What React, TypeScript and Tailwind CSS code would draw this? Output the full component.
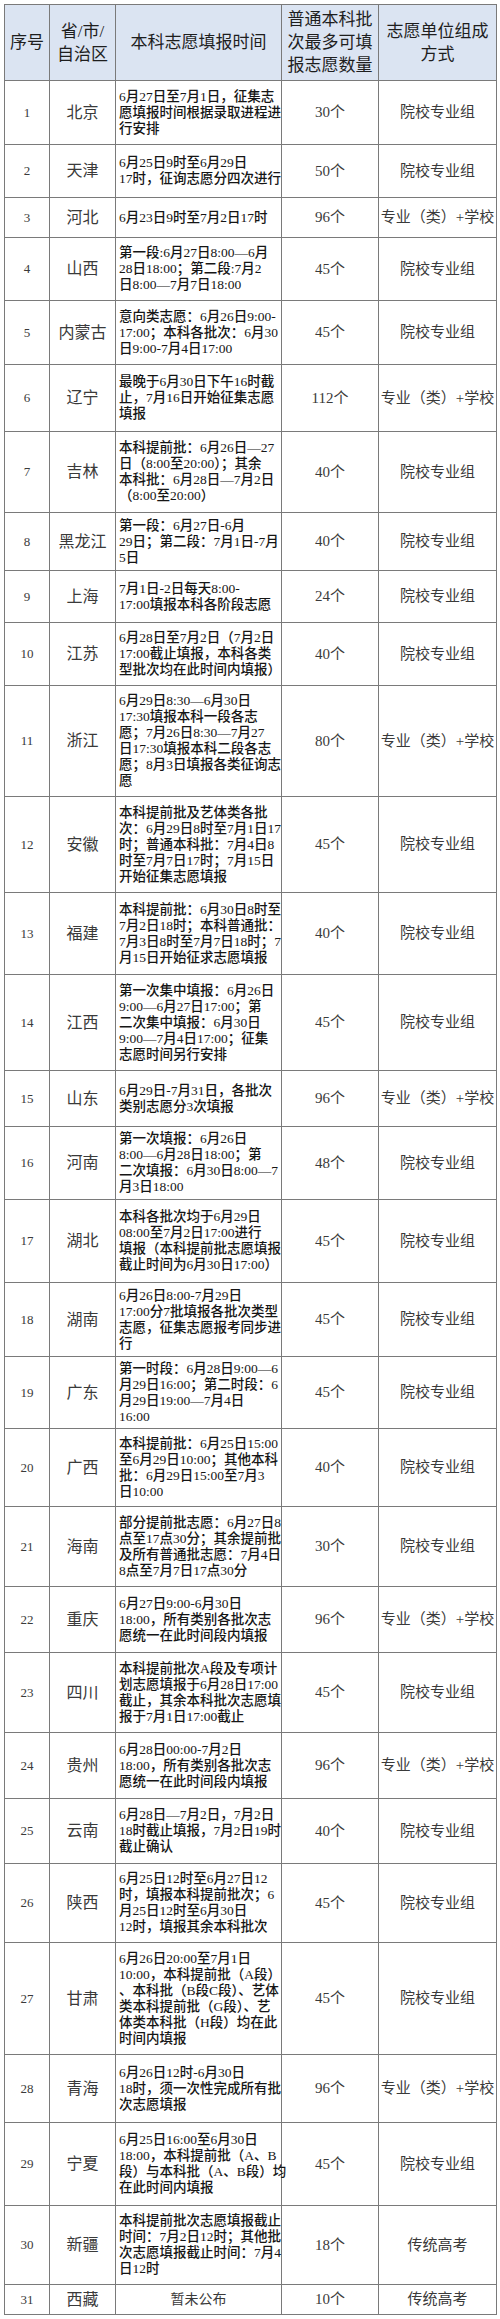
const FONT = 'font-["Liberation_Serif","Noto_Sans_CJK_SC",serif]'

type Row = {
  no: number
  name: string
  lines: string[]
  count: string
  mode: string
  h: string
}

const SCHOOL = '院校专业组'
const MAJOR = '专业（类）+学校'

const rows: Row[] = [
  { no: 1, name: '北京', lines: ['6月27日至7月1日，征集志', '愿填报时间根据录取进程进', '行安排'], count: '30个', mode: SCHOOL, h: 'h-[64px]' },
  { no: 2, name: '天津', lines: ['6月25日9时至6月29日', '17时，征询志愿分四次进行'], count: '50个', mode: SCHOOL, h: 'h-[53px]' },
  { no: 3, name: '河北', lines: ['6月23日9时至7月2日17时'], count: '96个', mode: MAJOR, h: 'h-[40px]' },
  { no: 4, name: '山西', lines: ['第一段:6月27日8:00—6月', '28日18:00；第二段:7月2', '日8:00—7月7日18:00'], count: '45个', mode: SCHOOL, h: 'h-[63px]' },
  { no: 5, name: '内蒙古', lines: ['意向类志愿：6月26日9:00-', '17:00；本科各批次：6月30', '日9:00-7月4日17:00'], count: '45个', mode: SCHOOL, h: 'h-[64px]' },
  { no: 6, name: '辽宁', lines: ['最晚于6月30日下午16时截', '止，7月16日开始征集志愿', '填报'], count: '112个', mode: MAJOR, h: 'h-[67px]' },
  { no: 7, name: '吉林', lines: ['本科提前批：6月26日—27', '日（8:00至20:00）；其余', '本科批：6月28日—7月2日', '（8:00至20:00）'], count: '40个', mode: SCHOOL, h: 'h-[81px]' },
  { no: 8, name: '黑龙江', lines: ['第一段：6月27日-6月', '29日；第二段：7月1日-7月', '5日'], count: '40个', mode: SCHOOL, h: 'h-[58px]' },
  { no: 9, name: '上海', lines: ['7月1日-2日每天8:00-', '17:00填报本科各阶段志愿'], count: '24个', mode: SCHOOL, h: 'h-[52px]' },
  { no: 10, name: '江苏', lines: ['6月28日至7月2日（7月2日', '17:00截止填报，本科各类', '型批次均在此时间内填报）'], count: '40个', mode: SCHOOL, h: 'h-[63px]' },
  { no: 11, name: '浙江', lines: ['6月29日8:30—6月30日', '17:30填报本科一段各志', '愿；7月26日8:30—7月27', '日17:30填报本科二段各志', '愿；8月3日填报各类征询志', '愿'], count: '80个', mode: MAJOR, h: 'h-[111px]' },
  { no: 12, name: '安徽', lines: ['本科提前批及艺体类各批', '次：6月29日8时至7月1日17', '时；普通本科批：7月4日8', '时至7月7日17时；7月15日', '开始征集志愿填报'], count: '45个', mode: SCHOOL, h: 'h-[96px]' },
  { no: 13, name: '福建', lines: ['本科提前批：6月30日8时至', '7月2日18时；本科普通批：', '7月3日8时至7月7日18时；7', '月15日开始征求志愿填报'], count: '40个', mode: SCHOOL, h: 'h-[82px]' },
  { no: 14, name: '江西', lines: ['第一次集中填报：6月26日', '9:00—6月27日17:00；第', '二次集中填报：6月30日', '9:00—7月4日17:00；征集', '志愿时间另行安排'], count: '45个', mode: SCHOOL, h: 'h-[96px]' },
  { no: 15, name: '山东', lines: ['6月29日-7月31日，各批次', '类别志愿分3次填报'], count: '96个', mode: MAJOR, h: 'h-[56px]' },
  { no: 16, name: '河南', lines: ['第一次填报：6月26日', '8:00—6月28日18:00；第', '二次填报：6月30日8:00—7', '月3日18:00'], count: '48个', mode: SCHOOL, h: 'h-[73px]' },
  { no: 17, name: '湖北', lines: ['本科各批次均于6月29日', '08:00至7月2日17:00进行', '填报（本科提前批志愿填报', '截止时间为6月30日17:00）'], count: '45个', mode: SCHOOL, h: 'h-[83px]' },
  { no: 18, name: '湖南', lines: ['6月26日8:00-7月29日', '17:00分7批填报各批次类型', '志愿，征集志愿报考同步进', '行'], count: '45个', mode: SCHOOL, h: 'h-[74px]' },
  { no: 19, name: '广东', lines: ['第一时段：6月28日9:00—6', '月29日16:00；第二时段：6', '月29日19:00—7月4日', '16:00'], count: '45个', mode: SCHOOL, h: 'h-[72px]' },
  { no: 20, name: '广西', lines: ['本科提前批：6月25日15:00', '至6月29日10:00；其他本科', '批：6月29日15:00至7月3', '日10:00'], count: '40个', mode: SCHOOL, h: 'h-[78px]' },
  { no: 21, name: '海南', lines: ['部分提前批志愿：6月27日8', '点至17点30分；其余提前批', '及所有普通批志愿：7月4日', '8点至7月7日17点30分'], count: '30个', mode: SCHOOL, h: 'h-[80px]' },
  { no: 22, name: '重庆', lines: ['6月27日9:00-6月30日', '18:00，所有类别各批次志', '愿统一在此时间段内填报'], count: '96个', mode: MAJOR, h: 'h-[66px]' },
  { no: 23, name: '四川', lines: ['本科提前批次A段及专项计', '划志愿填报于6月28日17:00', '截止，其余本科批次志愿填', '报于7月1日17:00截止'], count: '45个', mode: SCHOOL, h: 'h-[80px]' },
  { no: 24, name: '贵州', lines: ['6月28日00:00-7月2日', '18:00，所有类别各批次志', '愿统一在此时间段内填报'], count: '96个', mode: MAJOR, h: 'h-[66px]' },
  { no: 25, name: '云南', lines: ['6月28日—7月2日，7月2日', '18时截止填报，7月2日19时', '截止确认'], count: '40个', mode: SCHOOL, h: 'h-[65px]' },
  { no: 26, name: '陕西', lines: ['6月25日12时至6月27日12', '时，填报本科提前批次；6', '月25日12时至6月30日', '12时，填报其余本科批次'], count: '45个', mode: SCHOOL, h: 'h-[79px]' },
  { no: 27, name: '甘肃', lines: ['6月26日20:00至7月1日', '10:00，本科提前批（A段）', '、本科批（B段C段）、艺体', '类本科提前批（G段）、艺', '体类本科批（H段）均在此', '时间内填报'], count: '45个', mode: SCHOOL, h: 'h-[112px]' },
  { no: 28, name: '青海', lines: ['6月26日12时-6月30日', '18时，须一次性完成所有批', '次志愿填报'], count: '96个', mode: MAJOR, h: 'h-[68px]' },
  { no: 29, name: '宁夏', lines: ['6月25日16:00至6月30日', '18:00，本科提前批（A、B', '段）与本科批（A、B段）均', '在此时间内填报'], count: '45个', mode: SCHOOL, h: 'h-[83px]' },
  { no: 30, name: '新疆', lines: ['本科提前批次志愿填报截止', '时间：7月2日12时；其他批', '次志愿填报截止时间：7月4', '日12时'], count: '18个', mode: '传统高考', h: 'h-[79px]' },
]

function Cell({ w, children, className = '' }: { w: string; children: React.ReactNode; className?: string }) {
  return (
    <div className={`${w} shrink-0 h-full border-r border-b border-[#7a7a7a] flex items-center justify-center ${className}`}>
      {children}
    </div>
  )
}

export default function App() {
  return (
    <div className={`w-[500px] h-[2319px] bg-white pt-[4px] pl-[4px] ${FONT}`}>
      <div className="w-[493px] border-l border-t border-[#7a7a7a]">
        {/* 表头 */}
        <div className="flex h-[76px] bg-[#dbe4f2] text-[17px] leading-[23px] text-[#1e1e1e] text-center">
          <Cell w="w-[45px]">序号</Cell>
          <Cell w="w-[66px]">
            <span>省/市/<br />自治区</span>
          </Cell>
          <Cell w="w-[166px]">本科志愿填报时间</Cell>
          <Cell w="w-[97px]">
            <span>普通本科批<br />次最多可填<br />报志愿数量</span>
          </Cell>
          <Cell w="w-[118px]">
            <span>志愿单位组成<br />方式</span>
          </Cell>
        </div>

        {rows.map((r) => (
          <div key={r.no} className={`flex ${r.h} text-[#3a3a3a]`}>
            <Cell w="w-[45px]" className="text-[13px]">{r.no}</Cell>
            <Cell w="w-[66px]" className="text-[16px]">{r.name}</Cell>
            <Cell w="w-[166px]" className="justify-start pl-[3px]">
              <div className="text-[13.5px] leading-[16px] font-medium text-[#151515] whitespace-nowrap">
                {r.lines.map((l, i) => (
                  <div key={i}>{l}</div>
                ))}
              </div>
            </Cell>
            <Cell w="w-[97px]" className="text-[15px]">{r.count}</Cell>
            <Cell w="w-[118px]" className="text-[15px] whitespace-nowrap">{r.mode}</Cell>
          </div>
        ))}

        <div className="flex h-[30px] text-[#3a3a3a]">
          <Cell w="w-[45px]" className="text-[13px]">31</Cell>
          <Cell w="w-[66px]" className="text-[16px]">西藏</Cell>
          <Cell w="w-[166px]" className="text-[14px]">暂未公布</Cell>
          <Cell w="w-[97px]" className="text-[15px]">10个</Cell>
          <Cell w="w-[118px]" className="text-[15px]">传统高考</Cell>
        </div>
      </div>
    </div>
  )
}
